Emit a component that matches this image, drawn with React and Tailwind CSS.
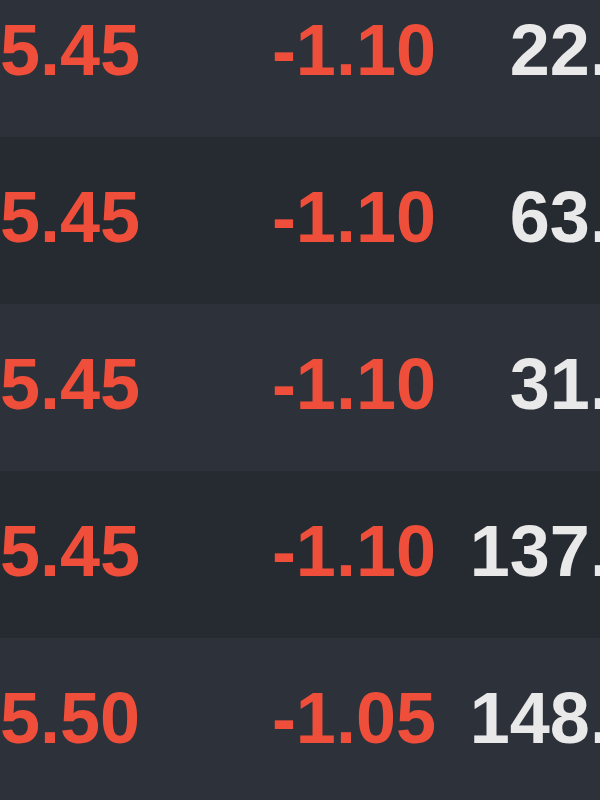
const rows = [
  { price: "5.45", change: "-1.10", vol: "22.40" },
  { price: "5.45", change: "-1.10", vol: "63.20" },
  { price: "5.45", change: "-1.10", vol: "31.60" },
  { price: "5.45", change: "-1.10", vol: "137.50" },
  { price: "5.50", change: "-1.05", vol: "148.30" },
];

export default function App() {
  return (
    <div className="w-[600px] h-[800px] overflow-hidden bg-[#2d323a] font-['Liberation_Sans',Arial,sans-serif] font-bold text-[72px] leading-none">
      <div className="w-[700px] -mt-[30px]">
        {rows.map((row, i) => (
          <div
            key={i}
            className={`grid grid-cols-[160px_276px_254px] items-center h-[167px] pb-[7px] ${
              i % 2 === 0 ? "bg-[#2d323a]" : "bg-[#262a31]"
            }`}
          >
            <span className="text-[#ef4f3a] text-left">{row.price}</span>
            <span className="text-[#ef4f3a] text-right">{row.change}</span>
            <span className="text-[#e9e9e9] text-right">{row.vol}</span>
          </div>
        ))}
      </div>
    </div>
  );
}
